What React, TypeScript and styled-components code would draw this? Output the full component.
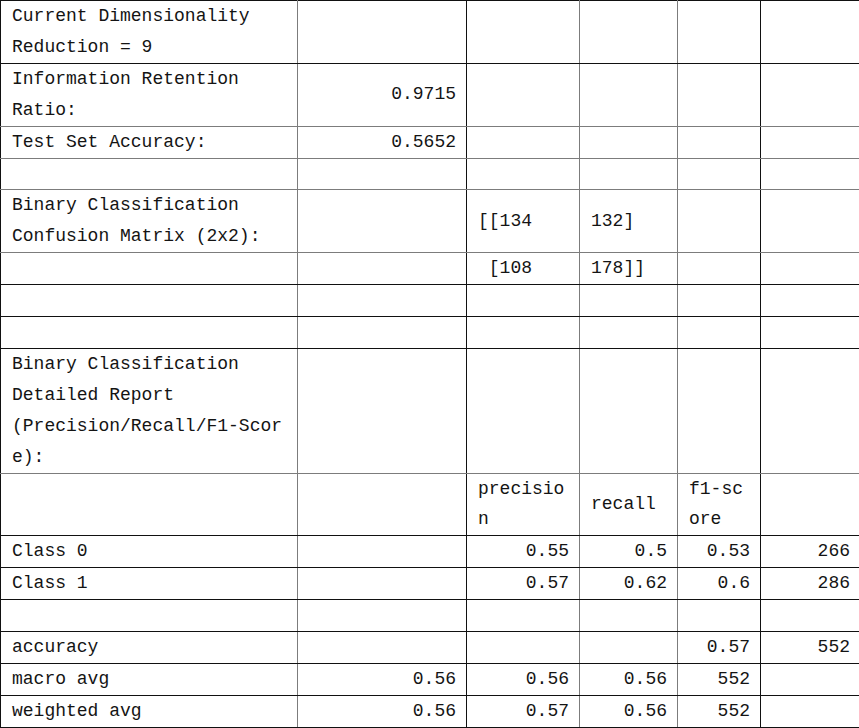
import styled, { createGlobalStyle } from 'styled-components';

const GlobalStyle = createGlobalStyle`
  html, body {
    margin: 0;
    padding: 0;
    background: #ffffff;
    overflow: hidden;
  }
`;

const DARK = '#111111';
const GRAY = '#7c7c7c';
const LINE_H = 30.9;

const COLS = [
  { width: 297, line: GRAY },
  { width: 169, line: DARK },
  { width: 113, line: GRAY },
  { width: 98, line: GRAY },
  { width: 83, line: DARK },
  { width: 100, line: 'transparent' },
];

const Sheet = styled.table`
  border-collapse: collapse;
  table-layout: fixed;
  width: ${COLS.reduce((s, c) => s + c.width, 0)}px;
  font-family: 'Liberation Mono', 'DejaVu Sans Mono', monospace;
  font-size: 18px;
  color: #141414;
  border-top: 1px solid ${DARK};
  border-left: 1px solid ${DARK};
`;

const Cell = styled.td<{ $lines: number; $num?: boolean; $right: string; $bottom: string }>`
  height: ${(p) => p.$lines * LINE_H}px;
  padding: 0 ${(p) => (p.$num ? '10px' : '4px')} 0 ${(p) => (p.$num ? '4px' : '11px')};
  line-height: ${LINE_H}px;
  vertical-align: middle;
  text-align: ${(p) => (p.$num ? 'right' : 'left')};
  white-space: pre;
  overflow: hidden;
  border-right: 1px solid ${(p) => p.$right};
  border-bottom: 1px solid ${(p) => p.$bottom};
`;

type Row = { lines: number; line: string; cells: string[] };

const rows: Row[] = [
  { lines: 2, line: DARK, cells: ['Current Dimensionality\nReduction = 9'] },
  { lines: 2, line: GRAY, cells: ['Information Retention\nRatio:', '0.9715'] },
  { lines: 1, line: GRAY, cells: ['Test Set Accuracy:', '0.5652'] },
  { lines: 1, line: GRAY, cells: [] },
  {
    lines: 2,
    line: GRAY,
    cells: ['Binary Classification\nConfusion Matrix (2x2):', '', '[[134', '132]'],
  },
  { lines: 1, line: DARK, cells: ['', '', ' [108', '178]]'] },
  { lines: 1, line: DARK, cells: [] },
  { lines: 1, line: DARK, cells: [] },
  {
    lines: 4,
    line: GRAY,
    cells: ['Binary Classification\nDetailed Report\n(Precision/Recall/F1-Scor\ne):'],
  },
  { lines: 2, line: DARK, cells: ['', '', 'precisio\nn', 'recall', 'f1-sc\nore'] },
  { lines: 1, line: DARK, cells: ['Class 0', '', '0.55', '0.5', '0.53', '266'] },
  { lines: 1, line: DARK, cells: ['Class 1', '', '0.57', '0.62', '0.6', '286'] },
  { lines: 1, line: DARK, cells: [] },
  { lines: 1, line: DARK, cells: ['accuracy', '', '', '', '0.57', '552'] },
  { lines: 1, line: DARK, cells: ['macro avg', '0.56', '0.56', '0.56', '552'] },
  { lines: 1, line: DARK, cells: ['weighted avg', '0.56', '0.57', '0.56', '552'] },
];

const isNumber = (v: string) => /^\d+(\.\d+)?$/.test(v);

export default function App() {
  return (
    <>
      <GlobalStyle />
      <Sheet>
        <colgroup>
          {COLS.map((c, i) => (
            <col key={i} style={{ width: c.width }} />
          ))}
        </colgroup>
        <tbody>
          {rows.map((row, r) => (
            <tr key={r}>
              {COLS.map((col, c) => {
                const value = row.cells[c] ?? '';
                return (
                  <Cell
                    key={c}
                    $lines={row.lines}
                    $num={isNumber(value)}
                    $right={col.line}
                    $bottom={row.line}
                  >
                    {value}
                  </Cell>
                );
              })}
            </tr>
          ))}
        </tbody>
      </Sheet>
    </>
  );
}
